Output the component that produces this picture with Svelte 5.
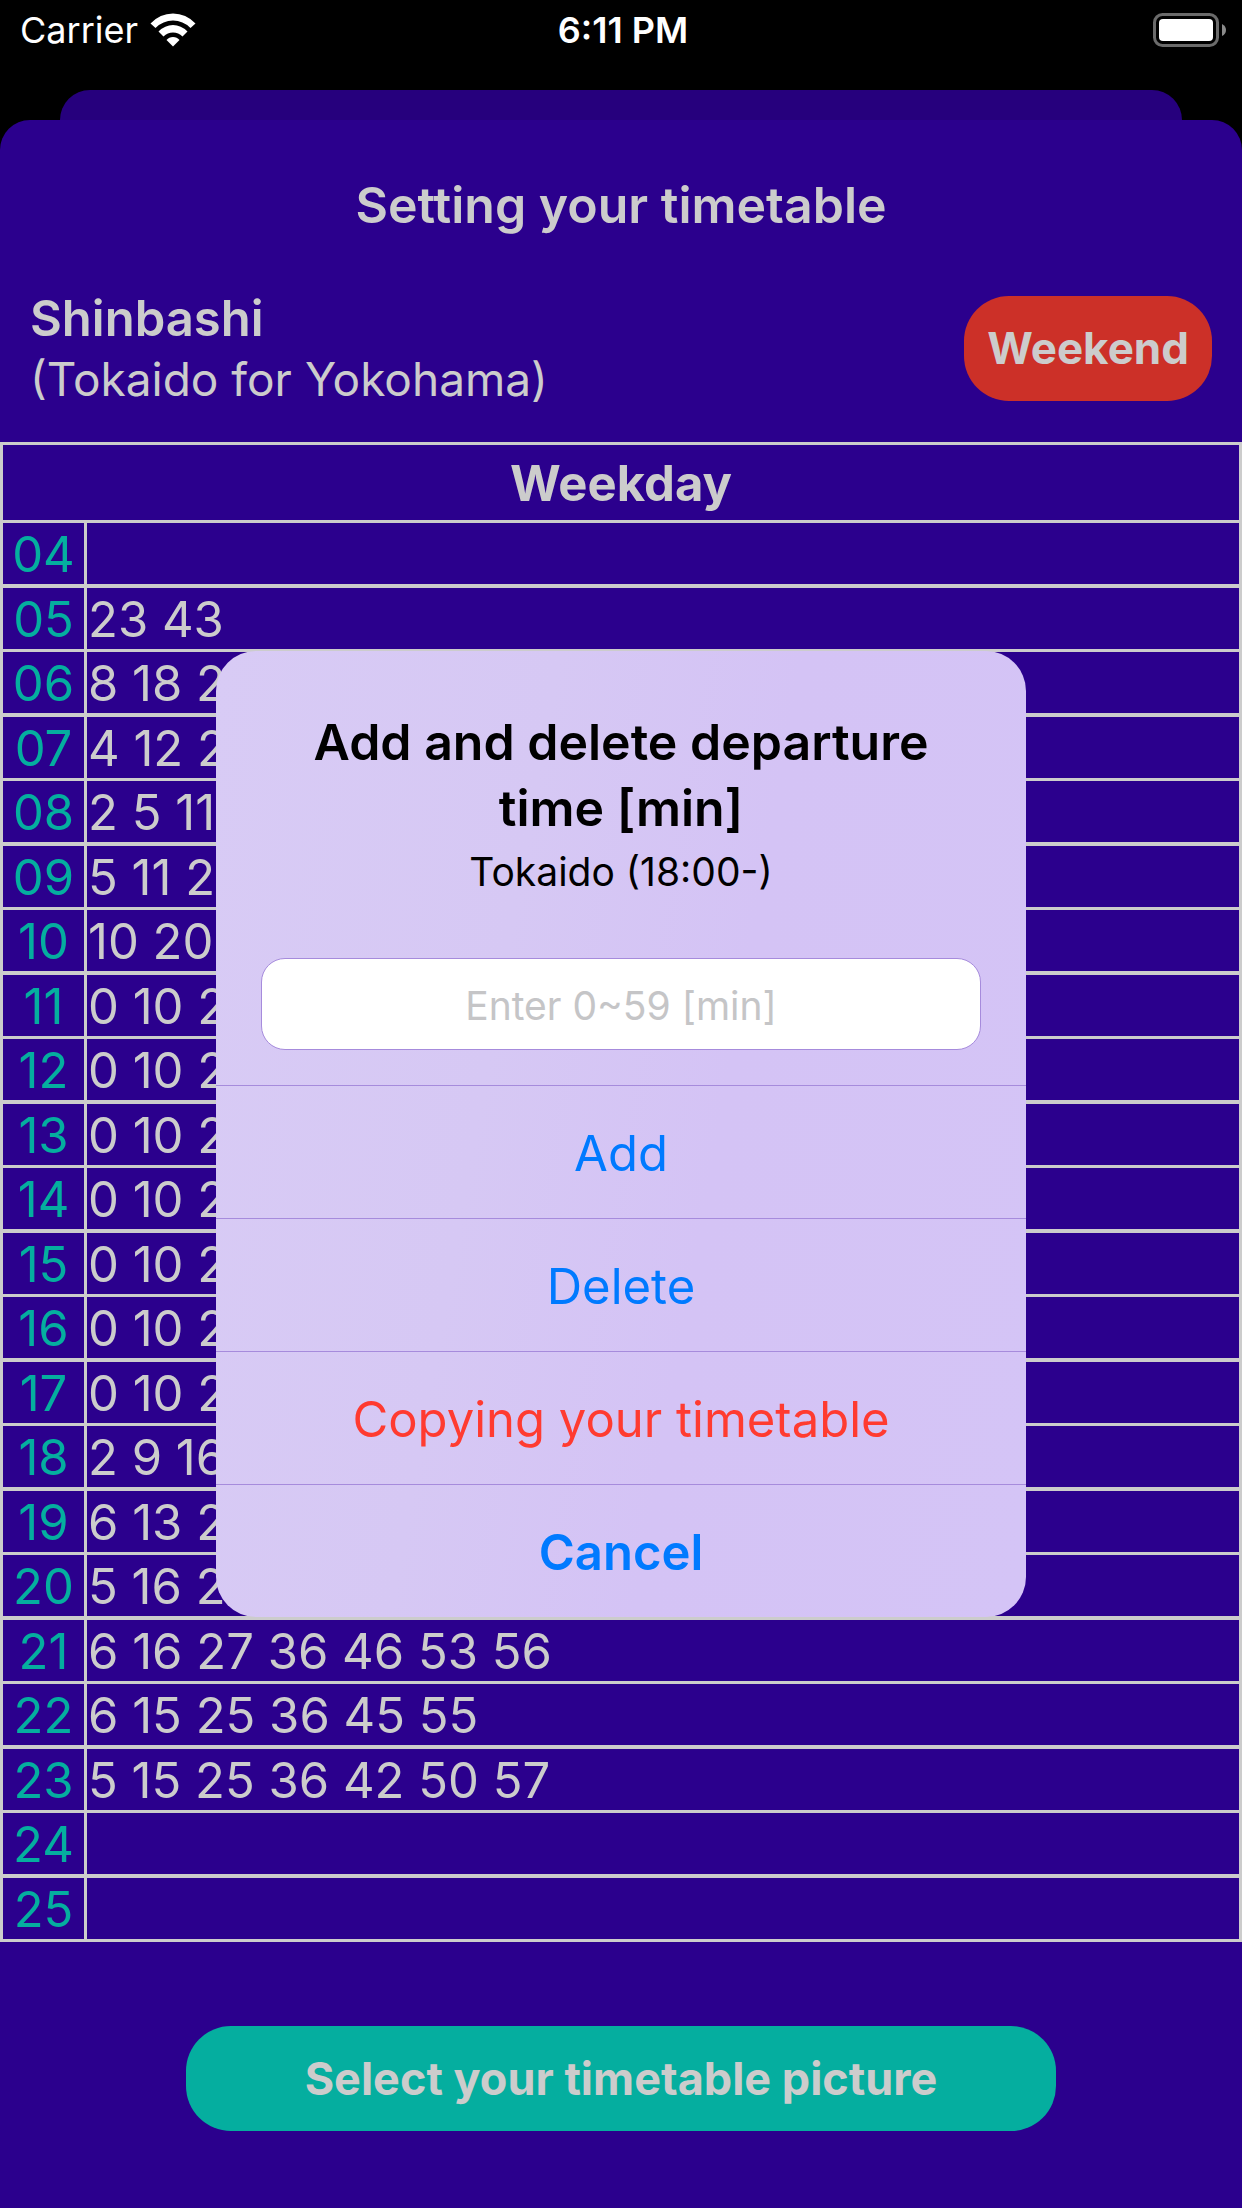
<script>
  const rows = [
    ['04', ''],
    ['05', '23 43'],
    ['06', '8 18 28'],
    ['07', '4 12 20'],
    ['08', '2 5 11'],
    ['09', '5 11 20'],
    ['10', '10 20'],
    ['11', '0 10 20'],
    ['12', '0 10 20'],
    ['13', '0 10 20'],
    ['14', '0 10 20'],
    ['15', '0 10 20'],
    ['16', '0 10 20'],
    ['17', '0 10 20'],
    ['18', '2 9 16'],
    ['19', '6 13 20'],
    ['20', '5 16 26'],
    ['21', '6 16 27 36 46 53 56'],
    ['22', '6 15 25 36 45 55'],
    ['23', '5 15 25 36 42 50 57'],
    ['24', ''],
    ['25', '']
  ];
  let minute = $state('');
</script>

<div class="screen">
  <header class="status">
    <div class="carrier">
      <span>Carrier</span>
      <svg class="wifi" viewBox="0 0 46 34" aria-hidden="true">
        <path d="M0.5 10.5 Q10 0.5 23 0.5 T45.5 10.5 L40.5 15 Q33 7.5 23 7.5 T5.5 15 Z" />
        <path d="M8.500 18.5 Q15 12 23 12 T37.5 18.5 L32.5 23.5 Q28.5 19.5 23 19.5 T13.5 23.5 Z" />
        <path d="M16.5 27 Q19 24 23 24 T29.5 27 L23 33.5 Z" />
      </svg>
    </div>
    <span class="clock">6:11 PM</span>
    <svg class="battery" viewBox="0 0 73 34" aria-hidden="true">
      <rect x="1.5" y="1.5" width="63" height="31" rx="8" fill="none" stroke="#6b6b6b" stroke-width="3" />
      <rect x="6" y="6" width="54" height="22" rx="4" fill="#fff" />
      <path d="M69 11 Q73 13 73 17 T69 23 Z" fill="#8a8a8a" />
    </svg>
  </header>

  <div class="behind"></div>

  <main class="sheet">
    <h1>Setting your timetable</h1>
    <section class="station">
      <div>
        <h2>Shinbashi</h2>
        <p>(Tokaido for Yokohama)</p>
      </div>
      <button class="pill weekend">Weekend</button>
    </section>

    <table>
      <thead>
        <tr><th colspan="2">Weekday</th></tr>
      </thead>
      <tbody>
        {#each rows as [hour, minutes]}
          <tr>
            <th scope="row">{hour}</th>
            <td>{minutes}</td>
          </tr>
        {/each}
      </tbody>
    </table>

    <button class="pill picture">Select your timetable picture</button>
  </main>

  <div class="overlay">
    <div class="alert" role="dialog" aria-labelledby="alert-title">
      <div class="message">
        <h3 id="alert-title">Add and delete departure time [min]</h3>
        <p>Tokaido (18:00-)</p>
        <input type="text" aria-label="Departure minute" placeholder="Enter 0~59 [min]" bind:value={minute} />
      </div>
      <button>Add</button>
      <button>Delete</button>
      <button class="danger">Copying your timetable</button>
      <button class="cancel">Cancel</button>
    </div>
  </div>
</div>

<style>
  :global(body) {
    margin: 0;
    background: #000;
  }
  .screen {
    position: relative;
    display: flex;
    flex-direction: column;
    min-height: 100vh;
    font-family: Inter, 'Liberation Sans', sans-serif;
    background: #000;
    color: #ccc;
  }
  h1, h2, h3, p {
    margin: 0;
  }
  button {
    border: 0;
    font-family: inherit;
    cursor: pointer;
  }
  .status {
    display: grid;
    grid-template-columns: 1fr auto 1fr;
    align-items: center;
    height: 60px;
    margin-bottom: 30px;
    padding: 0 16px 0 20px;
    color: #fff;
    font-size: 36px;
  }
  .carrier {
    display: flex;
    align-items: center;
    gap: 12px;
  }
  .clock {
    font-weight: 600;
  }
  .wifi {
    width: 46px;
    height: 34px;
    fill: #fff;
  }
  .battery {
    width: 73px;
    height: 34px;
    justify-self: end;
  }
  .behind {
    height: 60px;
    margin: 0 60px -30px;
    border-radius: 30px 30px 0 0;
    background: #26007d;
  }
  .sheet {
    position: relative;
    flex: 1;
    display: flex;
    flex-direction: column;
    border-radius: 30px 30px 0 0;
    background: #2b008d;
  }
  h1 {
    margin-top: 55px;
    font-size: 50px;
    line-height: 60px;
    font-weight: 600;
    text-align: center;
  }
  .station {
    display: flex;
    justify-content: space-between;
    align-items: center;
    margin: 53px 30px 34px;
  }
  h2 {
    font-size: 49px;
    line-height: 62px;
    font-weight: 600;
  }
  .station p {
    font-size: 46px;
    line-height: 58px;
  }
  .pill {
    height: 105px;
    border-radius: 45px;
    color: #ccc;
    font-size: 44px;
    font-weight: 700;
  }
  .weekend {
    padding: 0 23px;
    background: #cc3028;
  }
  .picture {
    width: 70%;
    margin: 84px auto 77px;
    background: #05ae9f;
    font-size: 45px;
  }
  table {
    width: 100%;
    border: 3px solid #ccc;
    border-bottom: 0;
    border-collapse: separate;
    border-spacing: 0;
    font-size: 49px;
    line-height: 59px;
  }
  th, td {
    padding: 2px 0 0;
    border-bottom: 3px solid #ccc;
    white-space: nowrap;
  }
  thead th {
    height: 73px;
    font-weight: 700;
  }
  tbody th {
    width: 81px;
    border-right: 3px solid #ccc;
    color: #05ae9f;
    font-weight: 400;
  }
  td {
    padding-left: 1px;
  }
  tbody tr:nth-child(odd) > * {
    border-bottom-width: 4px;
  }
  .overlay {
    position: absolute;
    inset: 0;
    display: flex;
    align-items: center;
    justify-content: center;
    padding-top: 60px;
  }
  .alert {
    width: 810px;
    overflow: hidden;
    border-radius: 40px;
    background: linear-gradient(100deg, #d8cbf5, #d6c8f4 35%, #d4c3f5 60%, #d4c4f6);
    color: #000;
    text-align: center;
  }
  .message {
    padding: 58px 45px 35px;
  }
  h3 {
    padding: 0 30px;
    font-size: 50px;
    line-height: 66px;
    font-weight: 600;
  }
  .message p {
    font-size: 39px;
    line-height: 62px;
  }
  input {
    box-sizing: border-box;
    display: block;
    width: 100%;
    height: 92px;
    margin-top: 55px;
    padding: 3px 20px 0;
    border: 1px solid #a68bdc;
    border-radius: 24px;
    background: #fff;
    font: inherit;
    font-size: 39px;
    text-align: center;
  }
  input::placeholder {
    color: #c5c5c7;
    opacity: 1;
  }
  .alert button {
    display: block;
    width: 100%;
    height: 133px;
    padding: 3px 0 0;
    border-top: 1px solid #a68bdc;
    background: none;
    color: #007aff;
    font-size: 49px;
  }
  .alert .danger {
    color: #ff3b30;
  }
  .alert .cancel {
    font-weight: 600;
  }
</style>
